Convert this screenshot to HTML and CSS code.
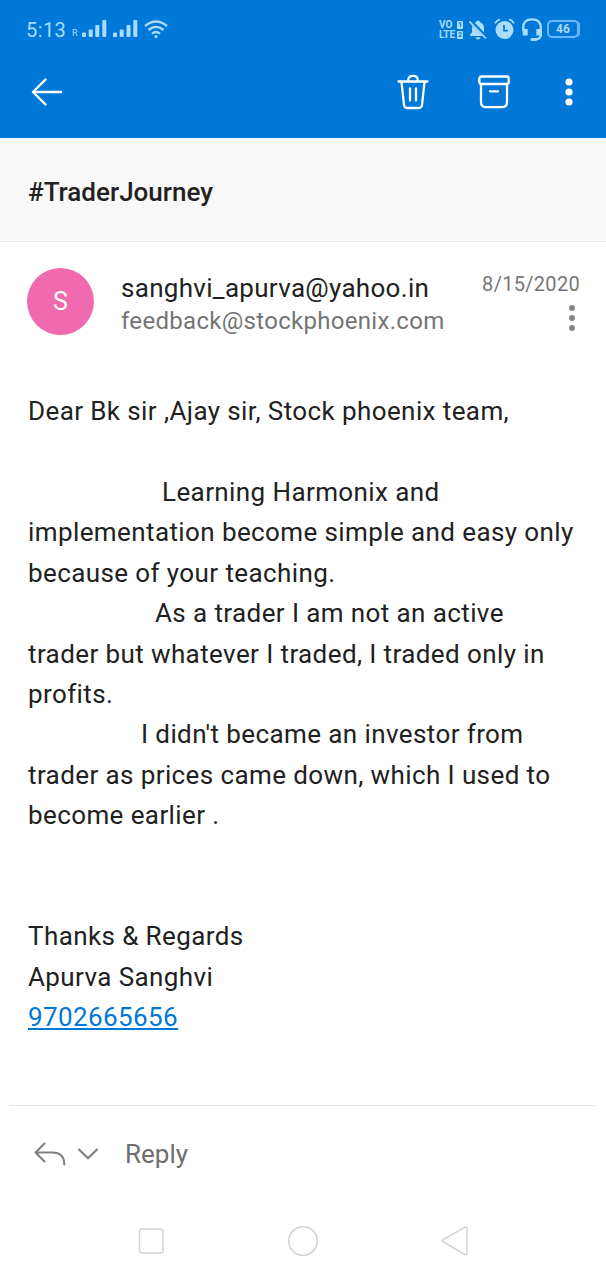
FILE: index.html
```html
<!DOCTYPE html>
<html lang="en">
<head>
  <meta charset="UTF-8" />
  <title>#TraderJourney</title>
  <meta name="viewport" content="width=device-width, initial-scale=1" />
  <link rel="stylesheet" href="styles.css">
</head>
<body>
  <header class="top">
    <div class="status-bar">
      <span class="clock">5:13</span>
      <span class="roaming">R</span>
      <svg class="signal" width="56" height="18" viewBox="0 0 56 18" fill="currentColor">
        <rect x="0" y="12.5" width="4" height="4.5" rx="1"/>
        <rect x="6.7" y="9.5" width="4" height="7.5" rx="1"/>
        <rect x="13.3" y="5" width="4" height="12" rx="1"/>
        <rect x="20.3" y="0" width="4" height="17" rx="1"/>
        <rect x="31" y="12.5" width="4" height="4.5" rx="1"/>
        <rect x="37.7" y="9.5" width="4" height="7.5" rx="1"/>
        <rect x="44.5" y="5" width="4" height="12" rx="1"/>
        <rect x="51.3" y="0" width="4" height="17" rx="1"/>
      </svg>
      <svg class="wifi" width="24" height="19" viewBox="0 0 24 19" fill="none" stroke="currentColor" stroke-width="2.3">
        <path d="M1 6Q12 -3 23 6"/>
        <path d="M4.5 10Q12 3.8 19.5 10"/>
        <path d="M8 13.6Q12 10.3 16 13.6"/>
        <circle cx="12" cy="16.6" r="1.6" fill="currentColor" stroke="none"/>
      </svg>

      <div class="volte">
        <div>VO<i>1</i></div>
        <div>LTE<i>2</i></div>
      </div>
      <svg class="bell" width="18" height="20" viewBox="0 0 18 20">
        <path d="M1 16V14.5L3 12.5V8Q3 3.5 7 2.3Q7.2 .5 9 .5Q10.8 .5 11 2.3Q15 3.5 15 8V12.5L17 14.5V16Z" fill="currentColor"/>
        <path d="M6.5 17.3H11.5Q11 19.5 9 19.5Q7 19.5 6.5 17.3Z" fill="currentColor"/>
        <path d="M1.5 1L18 18" stroke="#0078d7" stroke-width="3.6"/>
        <path d="M.5 1.5L17 18.5" stroke="currentColor" stroke-width="1.7"/>
      </svg>
      <svg class="alarm" width="21" height="22" viewBox="0 0 21 22" fill="none" stroke="currentColor">
        <circle cx="10.5" cy="12" r="9" fill="currentColor" stroke="none"/>
        <path d="M1 5.4Q2.5 2.4 5.8 1.4M15.2 1.4Q18.5 2.4 20 5.4" stroke-width="1.8"/>
        <path d="M10 7V12.6H14" stroke="#0078d7" stroke-width="1.8"/>
      </svg>
      <svg class="headset" width="22" height="24" viewBox="0 0 22 24" fill="none" stroke="currentColor" stroke-width="2.3">
        <path d="M2.2 13V10Q2.2 1.4 11 1.4Q19.8 1.4 19.8 10V17Q19.8 21.5 13 21.6"/>
        <path d="M4.2 11V17.6M17.8 11V17.6" stroke-width="5"/>
        <path d="M11 21.5H14.5" stroke-width="3" stroke-linecap="round"/>
      </svg>
      <div class="battery">46</div>
    </div>

    <div class="app-bar">
      <svg class="back" width="32" height="28" viewBox="0 0 32 28" fill="none" stroke="#fff" stroke-width="2.4" stroke-linecap="round" stroke-linejoin="round">
        <path d="M30 14H2M14.5 1.5L2 14L14.5 26.5"/>
      </svg>
      <svg class="trash" width="32" height="36" viewBox="0 0 32 36" fill="none" stroke="#fff" stroke-width="2.3" stroke-linecap="round" stroke-linejoin="round">
        <path d="M1.5 7.5H30.5M4.5 8L7 31Q7.3 34 10.2 34H21.8Q24.7 34 25 31L27.5 8"/>
        <path d="M11.3 7V5.8Q11.3 1.8 16 1.8Q20.7 1.8 20.7 5.8V7"/>
        <path d="M13 14.5V26.5M19 14.5V26.5"/>
      </svg>
      <svg class="archive" width="32" height="34" viewBox="0 0 32 34" fill="none" stroke="#fff" stroke-width="2.3" stroke-linecap="round" stroke-linejoin="round">
        <rect x="1.3" y="1.5" width="29.4" height="7.5" rx="2"/>
        <path d="M3 9V27Q3 32.2 8.2 32.2H23.8Q29 32.2 29 27V9"/>
        <path d="M12 16.3H20"/>
      </svg>
      <svg class="more" width="8" height="28" viewBox="0 0 8 28" fill="#fff">
        <circle cx="4" cy="4" r="3.6"/>
        <circle cx="4" cy="14" r="3.6"/>
        <circle cx="4" cy="24" r="3.6"/>
      </svg>
    </div>
  </header>

  <h1 class="subject">#TraderJourney</h1>

  <section class="sender">
    <div class="avatar">S</div>
    <div class="addresses">
      <div class="from">sanghvi_apurva@yahoo.in</div>
      <div class="to">feedback@stockphoenix.com</div>
    </div>
    <div class="meta">
      <span class="date">8/15/2020</span>
      <svg class="dots" width="8" height="28" viewBox="0 0 8 28" fill="#868686">
        <circle cx="4" cy="4" r="3"/>
        <circle cx="4" cy="14" r="3"/>
        <circle cx="4" cy="24" r="3"/>
      </svg>
    </div>
  </section>

  <main class="message">
    <p>Dear Bk sir ,Ajay sir, Stock phoenix team,</p>
    <br>
    <p class="indent-lg">Learning Harmonix and<br>implementation become simple and easy only<br>because of your teaching.</p>
    <p class="indent-md">As a trader I am not an active<br>trader but whatever I traded, I traded only in<br>profits.</p>
    <p class="indent-sm">I didn't became an investor from<br>trader as prices came down, which I used to<br>become earlier .</p>
    <br>
    <br>
    <p>Thanks &amp; Regards<br>Apurva Sanghvi<br><a href="tel:9702665656">9702665656</a></p>
  </main>

  <div class="reply-bar">
    <svg class="reply-icon" width="32" height="24" viewBox="0 0 32 24" fill="none" stroke="#808080" stroke-width="2.1" stroke-linecap="round" stroke-linejoin="round">
      <path d="M10.5 1.5L1.5 10.5L10.5 19.5M1.5 10.5H18Q30.3 10.5 30.3 22.5"/>
    </svg>
    <svg class="chevron" width="20" height="12" viewBox="0 0 20 12" fill="none" stroke="#808080" stroke-width="2.2" stroke-linecap="round" stroke-linejoin="round">
      <path d="M1 1.5L10 10.3L19 1.5"/>
    </svg>
    <span class="reply-label">Reply</span>
  </div>

  <nav class="nav-bar">
    <svg width="32" height="32" viewBox="0 0 32 32"><rect x="4.5" y="4" width="23.5" height="24" rx="2.5"/></svg>
    <svg width="32" height="32" viewBox="0 0 32 32"><circle cx="16" cy="16" r="14.3"/></svg>
    <svg width="32" height="32" viewBox="0 0 32 32"><path d="M4.6 14.4L25.6 2.3Q28 1.2 28 3.7V28Q28 30.6 25.6 29.3L4.6 17Q2.6 15.7 4.6 14.4Z"/></svg>
  </nav>
</body>
</html>
```

FILE: styles.css
```css
body {
  margin: 0;
  height: 1280px;
  display: flex;
  flex-direction: column;
  overflow: hidden;
  background: #fff;
  color: #212121;
  font-family: Roboto, Arial, sans-serif;
}

svg {
  display: block;
  flex-shrink: 0;
}

.top {
  height: 138px;
  background: #0078d7;
}

/* Status bar */
.status-bar {
  height: 60px;
  box-sizing: border-box;
  padding: 0 25px 0 26px;
  display: flex;
  align-items: center;
  color: #a9dcff;
}

.clock {
  width: 46px;
  font-size: 20px;
  letter-spacing: 0.4px;
}

.roaming {
  width: 10px;
  padding-top: 6px;
  font-size: 9px;
}

.signal {
  margin-top: -2px;
}

.wifi {
  margin-left: 6px;
  margin-top: -2px;
}

.volte {
  width: 24px;
  margin-left: auto;
  font-size: 10px;
  font-weight: 700;
  line-height: 10px;
}

.volte div {
  display: flex;
  justify-content: space-between;
}

.volte i {
  width: 6px;
  height: 8px;
  margin-top: 1px;
  border-radius: 1px;
  background: #a9dcff;
  color: #0078d7;
  font-size: 7px;
  font-style: normal;
  line-height: 8px;
  text-align: center;
}

.bell {
  margin-left: 6px;
}

.alarm {
  margin-left: 7px;
  margin-top: -3px;
}

.headset {
  margin-left: 6px;
}

.battery {
  width: 28px;
  height: 14px;
  margin: -2px 2px 0 4px;
  border: 2px solid #68bafc;
  border-radius: 5px;
  box-shadow: 2px 0 0 -1px #68bafc;
  font-size: 12px;
  font-weight: 700;
  line-height: 15px;
  text-align: center;
}

/* Toolbar */
.app-bar {
  height: 64px;
  padding: 0 33px 0 31px;
  display: flex;
  align-items: center;
}

.trash {
  margin-left: auto;
}

.archive {
  margin-left: 49px;
}

.more {
  margin-left: 55px;
}

.subject {
  height: 104px;
  box-sizing: border-box;
  margin: 0;
  padding: 2px 28px 0;
  border-bottom: 1px solid #ebebeb;
  background: #f8f8f8;
  font-size: 26px;
  font-weight: 500;
  line-height: 104px;
}

/* Sender */
.sender {
  height: 104px;
  padding: 26px 26px 0 27px;
  display: flex;
  box-sizing: border-box;
}

.avatar {
  width: 67px;
  height: 67px;
  border-radius: 50%;
  background: #f06ab0;
  color: #fff;
  font-size: 25px;
  line-height: 68px;
  text-align: center;
}

.addresses {
  margin-left: 27px;
  padding-top: 4px;
}

.from {
  font-size: 26px;
  line-height: 33px;
  letter-spacing: 0.3px;
}

.to {
  color: #757575;
  font-size: 24px;
  line-height: 33px;
  letter-spacing: 0.3px;
}

.meta {
  margin-left: auto;
  display: flex;
  flex-direction: column;
  align-items: flex-end;
}

.date {
  padding-top: 4px;
  color: #757575;
  font-size: 20px;
  line-height: 24px;
  letter-spacing: 0.3px;
}

.dots {
  margin: 8px 4px 0 0;
}

/* Message */
.message {
  flex: 1;
  padding: 45px 20px 0 28px;
  font-size: 26px;
  line-height: 40.42px;
  letter-spacing: 0.4px;
  white-space: nowrap;
}

.message p {
  margin: 0;
}

.indent-lg {
  text-indent: 134px;
}

.indent-md {
  text-indent: 127px;
}

.indent-sm {
  text-indent: 113px;
}

.message a {
  color: #0078d7;
}

/* Reply */
.reply-bar {
  height: 95px;
  margin: 0 10px;
  padding-left: 24px;
  border-top: 1px solid #e4e4e4;
  display: flex;
  align-items: center;
}

.chevron {
  margin-left: 12px;
}

.reply-label {
  margin-left: 27px;
  color: #6e6e6e;
  font-size: 26px;
}

.nav-bar {
  height: 79px;
  padding: 0 135px;
  display: flex;
  align-items: center;
  justify-content: space-between;
}

.nav-bar svg {
  fill: none;
  stroke: #d2d2d2;
  stroke-width: 1.5;
}
```
